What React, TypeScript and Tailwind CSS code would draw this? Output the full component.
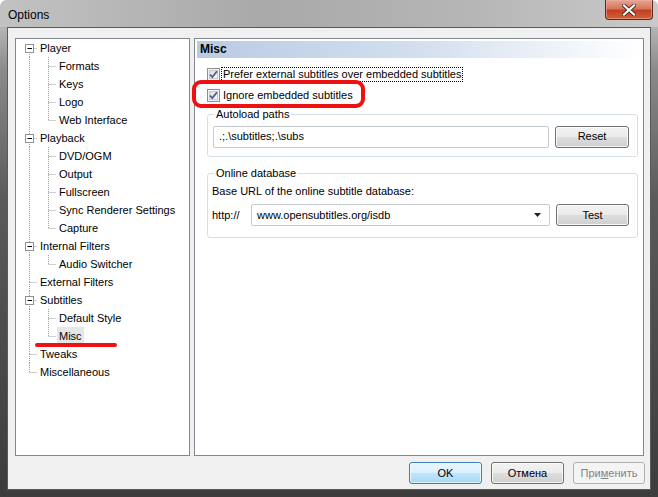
import React from 'react';

type TreeItem = {
  label: string;
  level: 0 | 1;
  expander?: boolean;
  lastChild?: boolean;
  first?: boolean;
  last?: boolean;
  selected?: boolean;
};

const TREE: TreeItem[] = [
  { label: 'Player', level: 0, expander: true, first: true },
  { label: 'Formats', level: 1 },
  { label: 'Keys', level: 1 },
  { label: 'Logo', level: 1 },
  { label: 'Web Interface', level: 1, lastChild: true },
  { label: 'Playback', level: 0, expander: true },
  { label: 'DVD/OGM', level: 1 },
  { label: 'Output', level: 1 },
  { label: 'Fullscreen', level: 1 },
  { label: 'Sync Renderer Settings', level: 1 },
  { label: 'Capture', level: 1, lastChild: true },
  { label: 'Internal Filters', level: 0, expander: true },
  { label: 'Audio Switcher', level: 1, lastChild: true },
  { label: 'External Filters', level: 0 },
  { label: 'Subtitles', level: 0, expander: true },
  { label: 'Default Style', level: 1 },
  { label: 'Misc', level: 1, lastChild: true, selected: true },
  { label: 'Tweaks', level: 0 },
  { label: 'Miscellaneous', level: 0, last: true },
];

const DOT = { stroke: '#a0a0a0', strokeWidth: 1, strokeDasharray: '1 1' };

// tree connector lines for a single row
const TreeLines: React.FC<{ item: TreeItem }> = ({ item }) => {
  const rx = 13.5;
  const cx = 32.5;
  return (
    <svg width={item.level === 0 ? 22 : 41} height={18} className="shrink-0">
      {item.level === 0 ? (
        <>
          {!item.first && <line x1={rx} y1={0} x2={rx} y2={9} {...DOT} />}
          {!item.last && <line x1={rx} y1={9} x2={rx} y2={18} {...DOT} />}
          <line x1={rx} y1={9.5} x2={21} y2={9.5} {...DOT} />
          {item.expander && (
            <>
              <rect x={9.5} y={5.5} width={8} height={8} fill="#fff" stroke="#919191" />
              <line x1={11.5} y1={9.5} x2={16} y2={9.5} stroke="#000" />
            </>
          )}
        </>
      ) : (
        <>
          <line x1={rx} y1={0} x2={rx} y2={18} {...DOT} />
          <line x1={cx} y1={0} x2={cx} y2={item.lastChild ? 9 : 18} {...DOT} />
          <line x1={cx} y1={9.5} x2={40} y2={9.5} {...DOT} />
        </>
      )}
    </svg>
  );
};

const Checkbox: React.FC = () => (
  <svg width={13} height={13} className="shrink-0">
    <defs>
      <linearGradient id="cbg" x1="0" y1="0" x2="1" y2="1">
        <stop offset="0" stopColor="#dcdcdc" />
        <stop offset="1" stopColor="#fbfbfb" />
      </linearGradient>
    </defs>
    <rect x={0.5} y={0.5} width={12} height={12} fill="#f4f4f4" stroke="#8e8f8f" />
    <rect x={2.5} y={2.5} width={8} height={8} fill="url(#cbg)" stroke="#c9c9c9" />
    <path d="M3 6.5 L5.3 9 L10 3.2" fill="none" stroke="#4a5f97" strokeWidth={1.8} />
  </svg>
);

const Button: React.FC<{ children: React.ReactNode; className?: string; disabled?: boolean; focused?: boolean }> = ({
  children,
  className = '',
  disabled,
  focused,
}) => (
  <div
    className={`h-[22px] flex items-center justify-center rounded-[3px] border ${
      disabled
        ? 'border-[#adb2b5] bg-[#f4f4f4] text-[#838383]'
        : focused
        ? 'border-[#3c7fb1] bg-[linear-gradient(to_bottom,#eaf6fd_0%,#d9f0fc_50%,#bee6fd_51%,#a7d9f5_100%)] shadow-[inset_0_0_0_1px_#ffffffaa]'
        : 'border-[#707070] bg-[linear-gradient(to_bottom,#f2f2f2_0%,#ebebeb_50%,#dddddd_51%,#cfcfcf_100%)] shadow-[inset_0_0_0_1px_#ffffffcc]'
    } ${className}`}
  >
    {children}
  </div>
);

const GroupBox: React.FC<{ title: string; className?: string; children: React.ReactNode }> = ({ title, className = '', children }) => (
  <div className={`relative border border-[#d5dfe5] rounded-[3px] ${className}`}>
    <span className="absolute -top-[9px] left-[6px] bg-white px-[2px] leading-[16px]">{title}</span>
    {children}
  </div>
);

export default function App() {
  return (
    <div
      className="w-[658px] h-[497px] relative overflow-hidden rounded-t-[7px] bg-[linear-gradient(to_bottom,#c4c4c4_0px,#b4b4b4_28px,#8a8a8a_70px,#5a5a5a_200px,#3c3c3c_497px)] flex flex-col text-[11px] text-black whitespace-nowrap"
      style={{ fontFamily: '"Liberation Sans", Arial, sans-serif' }}
    >
      {/* title bar */}
      <div className="h-[27px] shrink-0 flex items-start pl-[8px] pt-[7px] relative bg-[linear-gradient(to_right,#c2c2c2,#a9a9a9_40%,#b5b5b5_70%,#c9c9c9)]">
        <span className="leading-[16px] text-[12px]">Options</span>
        <div className="absolute right-[5px] top-0 w-[48px] h-[20px] rounded-b-[4px] border border-t-0 border-[#5b2b20] bg-[linear-gradient(to_bottom,#e8a493_0%,#d67561_45%,#c4401f_55%,#d0623c_100%)] shadow-[inset_0_0_0_1px_#f0b0a088] flex items-center justify-center">
          <svg width={14} height={12} viewBox="0 0 14 12">
            <path d="M2 1.5 L12 10.5 M12 1.5 L2 10.5" stroke="#4a2a22" strokeWidth={4} strokeLinecap="square" />
            <path d="M2 1.5 L12 10.5 M12 1.5 L2 10.5" stroke="#fff" strokeWidth={2.2} strokeLinecap="square" />
          </svg>
        </div>
      </div>

      {/* client area */}
      <div className="mx-[7px] mb-[7px] flex-1 bg-[#f0f0f0] border border-[#5a5a5a] flex flex-col relative">
        <div className="flex gap-[4px] pt-[10px] pl-[7px] pr-[6px] h-[428px]">
          {/* tree */}
          <div className="w-[175px] h-full bg-white border border-[#828790] flex flex-col">
            {TREE.map((item) => (
              <div key={item.label} className="h-[18px] flex items-center">
                <TreeLines item={item} />
                <span className={`leading-[18px] px-[2px] ${item.selected ? 'bg-[#e6e6e6]' : ''}`}>{item.label}</span>
              </div>
            ))}
          </div>

          {/* page */}
          <div className="flex-1 h-full bg-white border border-[#828790] p-[2px] flex flex-col">
            <div className="h-[17px] bg-[linear-gradient(to_right,#b9cbe3,#d3dfee_50%,#ffffff)] pl-[3px] font-bold leading-[17px] text-[12px]">
              Misc
            </div>
            <div className="pl-[10px] pr-[3px] flex flex-col">
              <div className="mt-[9px] flex items-center h-[14px] gap-[2px]">
                <Checkbox />
                <span className="leading-[13px] outline outline-1 outline-dotted outline-[#000] px-[1px]">
                  Prefer external subtitles over embedded subtitles
                </span>
              </div>
              <div className="mt-[7px] flex items-center h-[14px] gap-[3px]">
                <Checkbox />
                <span className="leading-[14px]">Ignore embedded subtitles</span>
              </div>

              <GroupBox title="Autoload paths" className="mt-[12px] h-[43px] flex items-center pl-[5px] pr-[8px] pt-[2px] gap-[6px]">
                <div className="flex-1 h-[22px] border border-[#c5cad0] rounded-[2px] flex items-center pl-[5px]">.;.\subtitles;.\subs</div>
                <Button className="w-[74px]">Reset</Button>
              </GroupBox>

              <GroupBox title="Online database" className="mt-[16px] h-[65px] flex flex-col pl-[4px] pr-[8px] pt-[9px]">
                <div className="leading-[16px]">Base URL of the online subtitle database:</div>
                <div className="mt-[5px] flex items-center gap-[6px]">
                  <span className="w-[33px]">http://</span>
                  <div className="flex-1 h-[22px] border border-[#c5cad0] rounded-[2px] flex items-center pl-[5px] pr-[7px]">
                    <span className="flex-1">www.opensubtitles.org/isdb</span>
                    <svg width={8} height={5} viewBox="0 0 8 5">
                      <path d="M0 0 H7 L3.5 4 Z" fill="#222" />
                    </svg>
                  </div>
                  <Button className="w-[73px]">Test</Button>
                </div>
              </GroupBox>
            </div>
          </div>
        </div>

        {/* bottom buttons */}
        <div className="flex justify-end gap-[9px] pr-[5px] mt-[6px]">
          <Button focused className="w-[73px]">OK</Button>
          <Button className="w-[73px]">Отмена</Button>
          <Button disabled className="w-[72px]">
            При<span className="underline">м</span>енить
          </Button>
        </div>

        {/* red annotation marks drawn over the dialog */}
        <div className="absolute left-[184px] top-[52px] w-[173px] h-[28px] rounded-[9px] border-[4px] border-[#ee1111] pointer-events-none" />
        <div className="absolute left-[27px] top-[315px] w-[82px] h-[4px] rounded-full bg-[#ee1111] pointer-events-none" />
      </div>
    </div>
  );
}
